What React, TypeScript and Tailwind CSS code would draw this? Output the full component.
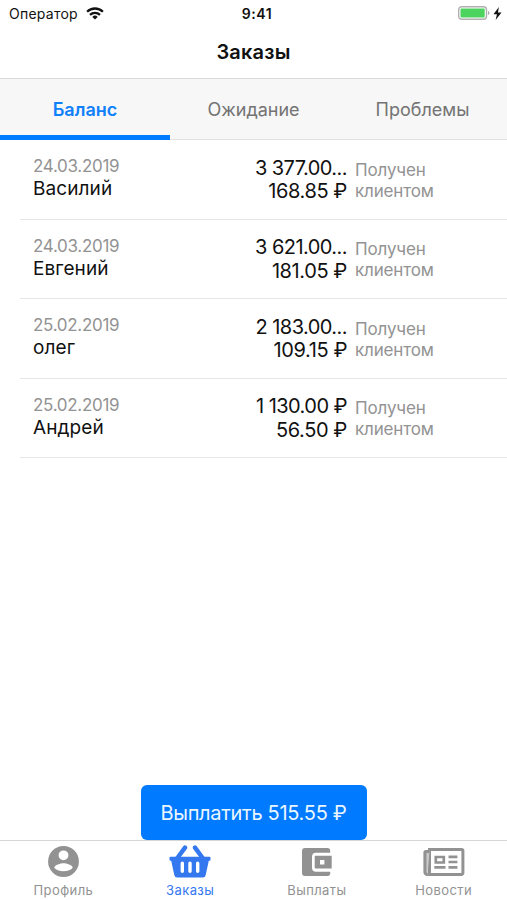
import { useState } from 'react'

interface Order {
  id: number
  date: string
  name: string
  total: string
  bonus: string
}

const orders: Order[] = [
  { id: 1, date: '24.03.2019', name: 'Василий', total: '3 377.00...', bonus: '168.85 ₽' },
  { id: 2, date: '24.03.2019', name: 'Евгений', total: '3 621.00...', bonus: '181.05 ₽' },
  { id: 3, date: '25.02.2019', name: 'олег', total: '2 183.00...', bonus: '109.15 ₽' },
  { id: 4, date: '25.02.2019', name: 'Андрей', total: '1 130.00 ₽', bonus: '56.50 ₽' },
]

const tabs = ['Баланс', 'Ожидание', 'Проблемы']

function WifiIcon() {
  return (
    <svg width="18" height="13" viewBox="0 0 18 13" fill="none" stroke="#111" strokeWidth="2.3">
      <path d="M1.1 4.7a11.3 11.3 0 0 1 15.8 0" />
      <path d="M4 7.8a7.2 7.2 0 0 1 10 0" />
      <path d="M9 12.6 6.3 9.9a3.9 3.9 0 0 1 5.4 0z" fill="#111" stroke="none" />
    </svg>
  )
}

function ProfileIcon() {
  return (
    <svg width="37" height="37" viewBox="0 0 24 24" fill="currentColor">
      <path
        fillRule="evenodd"
        d="M12 2a10 10 0 1 0 0 20 10 10 0 0 0 0-20zM12 4.800a3.200 3.200 0 1 1 0 6.400A3.200 3.200 0 0 1 12 4.800zM12 18.300c-2.700 0-4.900-.9-6-2.300.3-1.900 4-2.900 6-2.900s5.700 1 6 2.900c-1.100 1.400-3.300 2.300-6 2.300z"
      />
    </svg>
  )
}

function BasketIcon() {
  return (
    <svg width="42" height="33" viewBox="0 0 42 33" fill="none" stroke="currentColor" strokeLinecap="round">
      <path d="M16 2.600 8 13.500M26 2.600l8 10.900" strokeWidth="4.400" />
      <path
        d="M1.500 11.800h39a1 1 0 0 1 1 1v2a1 1 0 0 1-1 1H39.800L36.700 30a3 3 0 0 1-3 2.500H8.300a3 3 0 0 1-3-2.500L2.200 15.800h-.7a1 1 0 0 1-1-1v-2a1 1 0 0 1 1-1z"
        fill="currentColor"
        stroke="none"
      />
      <path d="M13.300 18.300v8M21 18.300v8M28.700 18.300v8" stroke="#fff" strokeWidth="3.400" />
    </svg>
  )
}

function WalletIcon() {
  return (
    <svg width="30" height="28" viewBox="0 0 30 28" fill="currentColor">
      <path d="M3 0h22.500A2.700 2.700 0 0 1 28.200 2.700v2.100H14a4 4 0 0 0-4 4v10.900a4 4 0 0 0 4 4h14.200v1.600a2.700 2.700 0 0 1-2.700 2.700H3a3 3 0 0 1-3-3V3a3 3 0 0 1 3-3z" />
      <path fillRule="evenodd" d="M13.700 7.800h16v12.800h-16a1 1 0 0 1-1-1V8.800a1 1 0 0 1 1-1zM18 12v4.400h4.400V12z" />
    </svg>
  )
}

function NewsIcon() {
  return (
    <svg width="42" height="28" viewBox="0 0 42 28" fill="none" stroke="currentColor" strokeWidth="3">
      <path d="M6.500 1.600H38.900a1 1 0 0 1 1 1V25a1.500 1.500 0 0 1-1.500 1.500H4.300A2.500 2.500 0 0 0 6.500 24z" />
      <path d="M6.500 3.400H2.900a1 1 0 0 0-1 1V23.500a2.500 2.500 0 0 0 2.700 2.900" fill="#c9c9c9" />
      <path d="M12.800 9h8v5.500h-8zM11.300 19.300h11.200M25.500 8.800h8.900M25.500 14h8.900M25.500 19.300h8.900" strokeWidth="2.700" />
    </svg>
  )
}

function StatusBar() {
  return (
    <div className="grid h-7 grid-cols-3 items-center pr-[5px] pb-[2px] pl-[9px] text-[14px]">
      <div className="flex items-center gap-2">
        <span className="tracking-[0.25px]">Оператор</span>
        <WifiIcon />
      </div>
      <span className="pl-[3px] text-center font-semibold tracking-[0.6px]">9:41</span>
      <div className="flex items-center justify-end gap-[3px]">
        <svg width="32" height="14" viewBox="0 0 32 14">
          <rect x="0.7" y="0.7" width="27.800" height="12.600" rx="3" fill="#fff" stroke="#b0b0b0" strokeWidth="1.400" />
          <rect x="2.500" y="2.500" width="24.200" height="9" rx="1" fill="#4cd45f" />
          <path d="M30 5v4q1.500-.6 1.500-2T30 5z" fill="#aaa" />
        </svg>
        <svg width="9" height="13" viewBox="0 0 8 12" fill="#111">
          <path d="M5.300 0 .3 6.800h3.200L2.300 12 7.700 5H4.400z" />
        </svg>
      </div>
    </div>
  )
}

const navItems = [
  { label: 'Профиль', icon: <ProfileIcon /> },
  { label: 'Заказы', icon: <BasketIcon /> },
  { label: 'Выплаты', icon: <WalletIcon /> },
  { label: 'Новости', icon: <NewsIcon /> },
]

function App() {
  const [activeTab, setActiveTab] = useState('Баланс')

  return (
    <div className="flex h-[900px] w-full flex-col bg-white font-[Inter,sans-serif] text-[#111]">
      <StatusBar />
      <h1 className="flex h-[51px] items-center justify-center border-b border-[#dadada] pb-[2px] text-[20px] font-semibold tracking-[0.2px]">
        Заказы
      </h1>

      <div className="grid h-[61px] grid-cols-3 border-b border-[#e1e1e1] bg-[#f7f7f7]">
        {tabs.map((tab) => (
          <button
            key={tab}
            onClick={() => setActiveTab(tab)}
            className={
              tab === activeTab
                ? '-mr-px -mb-px border-b-[5px] border-[#007aff] pt-[5px] text-[18px] font-semibold text-[#0f80fb]'
                : 'text-[18px] text-[#737373]'
            }
          >
            {tab}
          </button>
        ))}
      </div>

      <ul className="flex-1">
        {orders.map((order) => (
          <li key={order.id} className="ml-5 flex h-[79.500px] border-b border-[#e6e6e6] pl-[13px]">
            <div className="w-[190px] pt-[15px]">
              <p className="text-[17px] leading-[23px] tracking-[-0.3px] text-[#939393]">{order.date}</p>
              <p className="text-[19px] leading-[22.500px] tracking-[0.1px]">{order.name}</p>
            </div>
            <div className="w-[124px] pt-[16.500px] text-right text-[20px] leading-[23.500px]">
              <p className="tracking-[-0.55px]">{order.total}</p>
              <p className="tracking-[-0.4px]">{order.bonus}</p>
            </div>
            <p className="w-[110px] pt-[19.500px] pl-2 text-[17px] leading-[21px] tracking-[-0.15px] text-[#939393]">
              Получен клиентом
            </p>
          </li>
        ))}
      </ul>

      <button className="mx-auto h-[55px] w-[226px] rounded-md bg-[#007aff] text-[20px] tracking-[-0.3px] text-[#eaf6ff]">
        Выплатить 515.55 ₽
      </button>

      <nav className="grid h-[60px] grid-cols-4 border-t border-[#d6d6d6] text-[13px] tracking-[0.4px] text-[#929292]">
        {navItems.map((item) => (
          <div
            key={item.label}
            className={
              item.label === 'Заказы' ? 'flex flex-col items-center text-[#3478f0]' : 'flex flex-col items-center'
            }
          >
            <div className="flex h-[41px] items-center">{item.icon}</div>
            <span className="leading-4">{item.label}</span>
          </div>
        ))}
      </nav>
    </div>
  )
}

export default App
